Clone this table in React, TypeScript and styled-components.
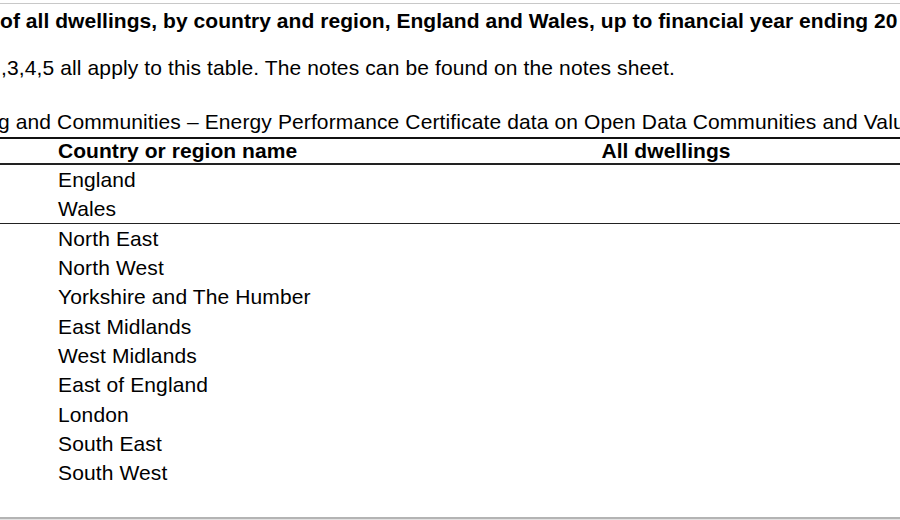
import React from "react";
import styled, { createGlobalStyle } from "styled-components";

const Global = createGlobalStyle`
  html, body { margin: 0; padding: 0; background: #ffffff; }
  body { font-family: "Liberation Sans", Arial, Helvetica, sans-serif; color: #000; }
`;

const Sheet = styled.div`
  width: 900px;
  height: 520px;
  overflow: hidden;
  display: flex;
  flex-direction: column;
  padding-top: 3px;
  box-sizing: border-box;
  letter-spacing: 0.12px;
`;

const TopRule = styled.div`
  height: 1px;
  background: #c8c8c8;
`;

const TextLine = styled.div<{ $h: number; $pad?: number; $lh: number; $bold?: boolean; $indent?: number }>`
  height: ${(p) => p.$h}px;
  padding-top: ${(p) => p.$pad ?? 0}px;
  box-sizing: border-box;
  line-height: ${(p) => p.$lh}px;
  font-size: 21px;
  font-weight: ${(p) => (p.$bold ? 700 : 400)};
  letter-spacing: ${(p) => (p.$bold ? 0.05 : 0.12)}px;
  white-space: nowrap;
  text-indent: ${(p) => p.$indent ?? 0}px;
`;

const Table = styled.div`
  display: grid;
  grid-template-columns: 52px 380px 1fr;
  border-top: 2px solid #111;
  font-size: 21px;
`;

const HeaderCell = styled.div<{ $center?: boolean }>`
  height: 24px;
  line-height: 24px;
  font-weight: 700;
  letter-spacing: 0.05px;
  padding-left: ${(p) => (p.$center ? 0 : 6)}px;
  text-align: ${(p) => (p.$center ? "center" : "left")};
  border-bottom: 2px solid #222;
  white-space: nowrap;
`;

const Cell = styled.div<{ $rule?: boolean }>`
  height: 29.35px;
  line-height: 29.35px;
  padding-left: 6px;
  white-space: nowrap;
  box-sizing: border-box;
  border-bottom: ${(p) => (p.$rule ? "1.5px solid #222" : "none")};
`;

const Spacer = styled.div`
  flex: 1;
`;

const BottomRule = styled.div`
  height: 2px;
  background: #b4b4b4;
  border-bottom: 1px solid #e2e2e2;
`;

const countries = ["England", "Wales"];
const regions = [
  "North East",
  "North West",
  "Yorkshire and The Humber",
  "East Midlands",
  "West Midlands",
  "East of England",
  "London",
  "South East",
  "South West",
];

export default function App() {
  return (
    <>
      <Global />
      <Sheet>
        <TopRule />
        <TextLine $h={34} $lh={34} $bold $indent={0}>
          of all dwellings, by country and region, England and Wales, up to financial year ending 20
        </TextLine>
        <TextLine $h={60} $lh={60} $indent={1}>
          ,3,4,5 all apply to this table. The notes can be found on the notes sheet.
        </TextLine>
        <TextLine $h={39} $pad={9} $lh={30} $indent={-2}>
          g and Communities – Energy Performance Certificate data on Open Data Communities and Valu
        </TextLine>
        <Table>
          <HeaderCell />
          <HeaderCell>Country or region name</HeaderCell>
          <HeaderCell $center>All dwellings</HeaderCell>
          {countries.map((c, i) => (
            <React.Fragment key={c}>
              <Cell $rule={i === countries.length - 1} />
              <Cell $rule={i === countries.length - 1}>{c}</Cell>
              <Cell $rule={i === countries.length - 1} />
            </React.Fragment>
          ))}
          {regions.map((r) => (
            <React.Fragment key={r}>
              <Cell />
              <Cell>{r}</Cell>
              <Cell />
            </React.Fragment>
          ))}
        </Table>
        <Spacer />
        <BottomRule />
      </Sheet>
    </>
  );
}
